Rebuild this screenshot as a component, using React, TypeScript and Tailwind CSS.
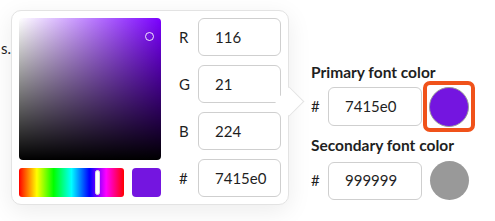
import React from "react";

const font = { fontFamily: "Lato, 'Open Sans', sans-serif" };

const RGB_ROWS = [
  { label: "R", value: "116" },
  { label: "G", value: "21" },
  { label: "B", value: "224" },
  { label: "#", value: "7415e0" },
];

function Field({ value, width }: { value: string; width: string }) {
  return (
    <div
      className={`${width} h-[38px] flex items-center pl-[16px] rounded-[6px] border border-[#cfcfcf] bg-white text-[15px] text-[#1f1f1f]`}
    >
      {value}
    </div>
  );
}

function ColorPopover() {
  return (
    <div className="relative w-[278px] h-[195px] shrink-0 rounded-[10px] border border-[#e3e3e3] bg-white shadow-[0_6px_24px_rgba(0,0,0,0.08)] p-[7px] flex">
      {/* Picker */}
      <div className="w-[143px] flex flex-col">
        <div className="relative h-[142px] rounded-[4px] bg-[linear-gradient(to_top,#000,transparent),linear-gradient(to_right,#fff,#7a00ff)]">
          <div className="absolute left-[126px] top-[14px] w-[9px] h-[9px] rounded-full border border-white/90" />
        </div>
        <div className="mt-[8px] flex gap-[8px]">
          <div className="relative w-[105px] h-[29px] rounded-[3px] bg-[linear-gradient(to_right,#f00,#ff0_17%,#0f0_33%,#0ff_50%,#00f_67%,#f0f_83%,#f00)]">
            <div className="absolute left-[76px] top-[2px] w-[5px] h-[25px] rounded-full bg-white border border-[#ddd]" />
          </div>
          <div className="w-[29px] h-[29px] rounded-[4px] bg-[#7415e0]" />
        </div>
      </div>

      {/* RGB inputs */}
      <div className="ml-[18px] flex flex-col gap-[9px]">
        {RGB_ROWS.map((row) => (
          <div key={row.label} className="flex items-center">
            <span className="w-[19px] text-[15px] text-[#1f1f1f]">{row.label}</span>
            <Field value={row.value} width="w-[83px]" />
          </div>
        ))}
      </div>

      {/* Arrow */}
      <div className="absolute right-[-12px] top-[80px] w-[21px] h-[21px] rotate-45 bg-white border-t border-r border-[#e3e3e3]" />
    </div>
  );
}

export default function App() {
  return (
    <div className="relative w-[495px] h-[221px] bg-white overflow-hidden" style={font}>
      <div className="flex">
        {/* page text behind popover */}
        <div className="w-[11px] shrink-0 pt-[37px] text-[15px] text-[#1f1f1f] overflow-hidden whitespace-nowrap flex justify-end">
          s.
        </div>
        <div className="mt-[10px]">
          <ColorPopover />
        </div>

        {/* Font colours */}
        <div className="ml-[22px] pt-[63px] flex flex-col text-[#1f1f1f]">
          <div className="text-[15.5px] font-bold leading-[18px]">Primary font color</div>
          <div className="flex items-center h-[51px]">
            <span className="w-[17px] text-[15px]">#</span>
            <Field value="7415e0" width="w-[94px] h-[39px]" />
            <div className="ml-[1px] w-[52px] h-[51px] rounded-[7px] border-[4px] border-[#f0521a] flex items-center justify-center">
              <div className="w-[40px] h-[40px] rounded-full bg-[#7415e0] border border-[#9a9a9a]" />
            </div>
          </div>
          <div className="mt-[4px] text-[15.5px] font-bold leading-[18px]">Secondary font color</div>
          <div className="mt-[7px] flex items-center">
            <span className="w-[17px] text-[15px]">#</span>
            <Field value="999999" width="w-[94px]" />
            <div className="ml-[8px] w-[39px] h-[39px] rounded-full bg-[#999999]" />
          </div>
        </div>
      </div>
    </div>
  );
}
